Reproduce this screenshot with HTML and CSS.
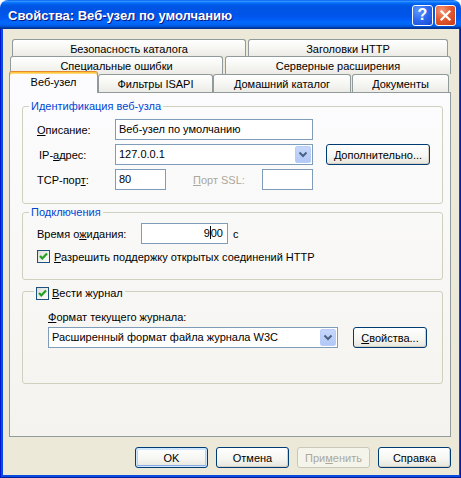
FILE: index.html
```html
<!DOCTYPE html>
<html lang="ru">
<head>
<meta charset="utf-8">
<title>Свойства: Веб-узел по умолчанию</title>
<link rel="stylesheet" href="styles.css">
</head>
<body>
<div class="window">
  <div class="titlebar">
    <span class="title">Свойства: Веб-узел по умолчанию</span>
    <div class="tb-buttons">
      <div class="tb-btn help">?</div>
      <div class="tb-btn close">
        <svg width="13" height="13" viewBox="0 0 13 13"><path d="M2.5 2.5 L10.5 10.5 M10.5 2.5 L2.5 10.5" stroke="#fff" stroke-width="2.2" stroke-linecap="square"/></svg>
      </div>
    </div>
  </div>
  <div class="frame">
    <div class="client">
      <div class="tabs">
        <div class="tabrow r1">
          <div class="tab w-sec">Безопасность каталога</div>
          <div class="tab w-hdr">Заголовки HTTP</div>
        </div>
        <div class="tabrow r2">
          <div class="tab w-err">Специальные ошибки</div>
          <div class="tab w-ext">Серверные расширения</div>
        </div>
        <div class="tabrow r3">
          <div class="tab sel w-web">Веб-узел</div>
          <div class="tab w-isapi">Фильтры ISAPI</div>
          <div class="tab w-home">Домашний каталог</div>
          <div class="tab w-docs">Документы</div>
        </div>
      </div>
      <div class="panel">
        <fieldset class="group g1">
          <legend>Идентификация веб-узла</legend>
          <div class="g1-grid">
            <span class="lbl"><u>О</u>писание:</span>
            <div class="input">Веб-узел по умолчанию</div>
            <span></span><span></span>
            <span class="lbl ind">IP-<u>а</u>дрес:</span>
            <div class="input select"><span class="val">127.0.0.1</span><span class="arrow"><svg width="16" height="17" viewBox="0 0 16 17"><path d="M4.5 6.5 L8 10 L11.5 6.5" fill="none" stroke="#4D6185" stroke-width="2"/></svg></span></div>
            <span></span>
            <div class="btn"><u>Д</u>ополнительно...</div>
            <span class="lbl">TCP-пор<u>т</u>:</span>
            <div class="tcp-row">
              <div class="input small">80</div>
              <span class="lbl dis ssl-lbl"><u>П</u>орт SSL:</span>
              <div class="input small dis-in"></div>
            </div>
          </div>
        </fieldset>
        <fieldset class="group g2">
          <legend>Подключения</legend>
          <div class="g2-body">
            <div class="row timeout">
              <span class="lbl w-time">Время о<u>ж</u>идания:</span>
              <div class="input num">9<span class="caret"></span>00</div>
              <span class="unit">с</span>
            </div>
            <div class="row check-row">
              <span class="check"><svg width="11" height="11" viewBox="0 0 11 11"><path d="M2 5 L4.3 7.5 L9 2.5" fill="none" stroke="#21A121" stroke-width="2.2"/></svg></span>
              <span class="check-lbl"><u>Р</u>азрешить поддержку открытых соединений HTTP</span>
            </div>
          </div>
        </fieldset>
        <fieldset class="group g3">
          <legend class="leg-check">
            <span class="check"><svg width="11" height="11" viewBox="0 0 11 11"><path d="M2 5 L4.3 7.5 L9 2.5" fill="none" stroke="#21A121" stroke-width="2.2"/></svg></span>
            <span class="check-lbl"><u>В</u>ести журнал</span>
          </legend>
          <div class="g3-body">
            <div class="fmt-lbl"><u>Ф</u>ормат текущего журнала:</div>
            <div class="row fmt-row">
              <div class="input select wide"><span class="val">Расширенный формат файла журнала W3C</span><span class="arrow"><svg width="16" height="17" viewBox="0 0 16 17"><path d="M4.5 6.5 L8 10 L11.5 6.5" fill="none" stroke="#4D6185" stroke-width="2"/></svg></span></div>
              <div class="btn props"><u>С</u>войства...</div>
            </div>
          </div>
        </fieldset>
      </div>
      <div class="buttons">
        <div class="btn dlg default">OK</div>
        <div class="btn dlg">Отмена</div>
        <div class="btn dlg disabled">При<u>м</u>енить</div>
        <div class="btn dlg">Справка</div>
      </div>
    </div>
  </div>
</div>
</body>
</html>
```
FILE: styles.css
```css
* { box-sizing: border-box; }
html, body { margin: 0; padding: 0; }
body {
  width: 461px; height: 478px; overflow: hidden;
  background: #ffffff;
  font-family: "Liberation Sans", Arial, sans-serif;
  font-size: 11px; color: #000;
}
u { text-decoration: underline; text-underline-offset: 1px; }

.window {
  width: 461px; height: 478px;
  display: flex; flex-direction: column;
  border-radius: 8px 8px 0 0;
  overflow: hidden;
}
.titlebar {
  height: 29px; flex: none;
  display: flex; align-items: center; justify-content: space-between;
  padding: 0 5px 0 8px;
  background: linear-gradient(180deg, #0058EE 0%, #3593FF 4%, #288EFF 6%, #127DFF 8%, #036FFC 10%, #0262EE 14%, #0057E5 20%, #0054E3 24%, #0055EB 56%, #005BF5 66%, #026AFE 76%, #0062EF 86%, #0052D6 92%, #0040AB 94%, #003092 100%);
}
.title {
  color: #fff; font-weight: bold; font-size: 13px;
  text-shadow: 1px 1px 0 #0A1883;
  margin-top: 1px;
}
.tb-buttons { display: flex; gap: 2px; margin-top: 1px; }
.tb-btn {
  width: 21px; height: 21px;
  border: 1px solid #fff; border-radius: 3px;
  display: flex; align-items: center; justify-content: center;
  color: #fff; font-weight: bold; font-size: 16px;
}
.help { background: radial-gradient(circle at 30% 25%, #5E98FF 0%, #2C68F0 50%, #1849D4 100%); }
.close { background: radial-gradient(circle at 30% 25%, #F39A7C 0%, #E35B32 45%, #C63A16 100%); }

.frame {
  flex: 1;
  display: flex;
  padding: 0 4px 3px 3px;
  background: #0A4BE0;
  box-shadow: inset 1px 0 #0019CF, inset -1px 0 #001CA0, inset 0 -1px #001CA0;
}
.client {
  flex: 1;
  background: #ECE9D8;
  padding: 10px 8px 0 6px;
  display: flex; flex-direction: column;
}

.tabs { display: flex; flex-direction: column; }
.tabrow { display: flex; align-items: flex-start; }
.r1 { height: 17px; margin-left: 3px; gap: 2px; }
.r2 { height: 18px; margin-left: 1px; gap: 2px; }
.r3 { height: 18px; position: relative; z-index: 2; }
.tab {
  height: 100%;
  border: 1px solid #919B9C; border-bottom: none;
  border-radius: 3px 3px 0 0;
  background: linear-gradient(#FFFFFF, #F6F6F3 50%, #ECEBE6);
  display: flex; align-items: center; justify-content: center;
  white-space: nowrap;
  padding-top: 1px;
}
.w-sec { width: 234px; }
.w-hdr { width: 200px; }
.w-err { width: 213px; }
.w-ext { width: 226px; }
.w-web { width: 89px; }
.w-isapi { width: 115px; }
.w-home { width: 138px; }
.w-docs { width: 97px; margin-left: 1px; }
.tab.sel {
  height: 22px; margin-top: -3px;
  background: #FCFCFE;
  border-top: 1px solid #E68B2C;
  box-shadow: inset 0 1px #FFC83C, inset 0 2px #FFD77A;
  padding-top: 0; padding-bottom: 2px;
}

.panel {
  height: 345px; flex: none;
  border: 1px solid #919B9C;
  background: linear-gradient(#FCFCFE, #F4F3EE);
  padding-top: 7px;
  display: flex; flex-direction: column;
}
.group {
  margin: 0 7px 0 12px;
  padding: 0;
  border: 1px solid #D0D0BF;
  border-radius: 3px;
  min-width: 0;
}
.group legend {
  margin-left: 6px;
  padding: 0 2px;
  line-height: 13px;
  color: #0046D5;
}
.g2 { margin-top: 2px; }
.g3 { margin-top: 3px; }

.lbl { white-space: nowrap; }
.ind { padding-left: 2px; }
.dis { color: #ACA899; }

.g1-grid {
  display: grid;
  grid-template-columns: 78px 198px 13px 104px;
  grid-auto-rows: 21px;
  row-gap: 4px;
  align-items: center;
  padding: 6px 0 13px 14px;
}
.input {
  height: 21px;
  border: 1px solid #7F9DB9;
  background: #fff;
  padding: 0 3px;
  line-height: 19px;
  white-space: nowrap;
  overflow: hidden;
}
.select { display: flex; justify-content: space-between; padding-right: 1px; }
.select .arrow {
  width: 16px; height: 17px; margin-top: 1px;
  border-radius: 2px;
  background: linear-gradient(#C6D7FC, #B2C8F6);
  border: 1px solid #B9CDF8;
  display: flex; align-items: center; justify-content: center;
}
.select .arrow svg { flex: none; }
.tcp-row { display: flex; align-items: center; }
.small { width: 51px; flex: none; }
.ssl-lbl { margin-left: 27px; width: 69px; }
.dis-in { background: #fff; }

.btn {
  height: 21px;
  border: 1px solid #003C74;
  border-radius: 3px;
  background: linear-gradient(#FFFFFF, #F5F5F1 60%, #E6E5DC);
  box-shadow: inset -1px -1px #D6D0C5;
  display: flex; align-items: center; justify-content: center;
  white-space: nowrap;
}

.g2-body { padding: 4px 0 16px 14px; }
.row { display: flex; align-items: center; }
.w-time { width: 104px; }
.num { width: 87px; text-align: right; padding-right: 4px; }
.caret { display: inline-block; width: 1px; height: 13px; background: #000; vertical-align: -2px; }
.unit { margin-left: 5px; }
.check-row { margin-top: 6px; }
.check {
  width: 13px; height: 13px; flex: none;
  border: 1px solid #1C5180;
  background: linear-gradient(135deg, #DCDCD7, #FFFFFF);
  display: inline-flex; align-items: center; justify-content: center;
}
.check-lbl { margin-left: 4px; white-space: nowrap; }

.group legend.leg-check {
  margin-left: 11px;
  padding: 4px 2px 0 2px;
  color: #000;
  display: flex; align-items: center;
}
.leg-check .check-lbl { margin-left: 3px; }
.g3-body { padding: 11px 0 35px 25px; }
.fmt-lbl { line-height: 13px; height: 13px; }
.fmt-row { margin-top: 3px; }
.wide { width: 290px; }
.props { width: 74px; margin-left: 15px; }

.buttons {
  display: flex; justify-content: flex-end; gap: 8px;
  margin-top: 10px; padding-right: 0;
}
.dlg { width: 73px; }
.default { box-shadow: inset 0 0 0 1px #CEE7FF, inset 0 -2px #89ADE4, inset 0 2px #CEE7FF, inset 2px 0 #B2CFF4, inset -2px 0 #B2CFF4; }
.disabled {
  border-color: #C9C7BA; color: #ACA899;
  background: #F5F4EA; box-shadow: none;
}
```
